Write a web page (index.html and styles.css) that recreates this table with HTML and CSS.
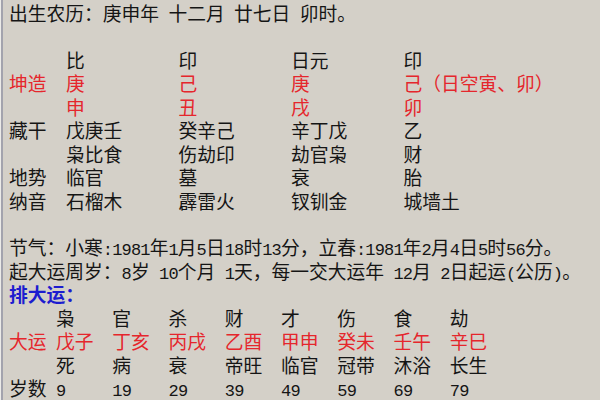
FILE: index.html
```html
<!DOCTYPE html>
<html lang="zh-CN">
<head>
<meta charset="utf-8">
<title>八字排盘</title>
<link rel="stylesheet" href="styles.css">
</head>
<body>
<div class="page">
  <p class="line">出生农历：庚申年<span class="h"> </span>十二月<span class="h"> </span>廿七日<span class="h"> </span>卯时。</p>
  <div class="blank"></div>

  <div class="pillars">
    <span></span><span>比</span><span>印</span><span>日元</span><span>印</span>
    <span class="red">坤造</span><span class="red">庚</span><span class="red">己</span><span class="red">庚</span><span class="red">己（日空寅、卯）</span>
    <span></span><span class="red">申</span><span class="red">丑</span><span class="red">戌</span><span class="red">卯</span>
    <span>藏干</span><span>戊庚壬</span><span>癸辛己</span><span>辛丁戊</span><span>乙</span>
    <span></span><span>枭比食</span><span>伤劫印</span><span>劫官枭</span><span>财</span>
    <span>地势</span><span>临官</span><span>墓</span><span>衰</span><span>胎</span>
    <span>纳音</span><span>石榴木</span><span>霹雷火</span><span>钗钏金</span><span>城墙土</span>
  </div>
  <div class="blank"></div>

  <p class="line">节气：小寒<span class="h">:1981</span>年<span class="h">1</span>月<span class="h">5</span>日<span class="h">18</span>时<span class="h">13</span>分，立春<span class="h">:1981</span>年<span class="h">2</span>月<span class="h">4</span>日<span class="h">5</span>时<span class="h">56</span>分。</p>
  <p class="line">起大运周岁：<span class="h">8</span>岁<span class="h"> 10</span>个月<span class="h"> 1</span>天，每一交大运年<span class="h"> 12</span>月<span class="h"> 2</span>日起运<span class="h">(</span>公历<span class="h">)</span>。</p>
  <p class="line title">排大运：</p>

  <div class="dayun">
    <span></span><span>枭</span><span>官</span><span>杀</span><span>财</span><span>才</span><span>伤</span><span>食</span><span>劫</span>
    <span class="red">大运</span><span class="red">戊子</span><span class="red">丁亥</span><span class="red">丙戌</span><span class="red">乙酉</span><span class="red">甲申</span><span class="red">癸未</span><span class="red">壬午</span><span class="red">辛巳</span>
    <span></span><span>死</span><span>病</span><span>衰</span><span>帝旺</span><span>临官</span><span>冠带</span><span>沐浴</span><span>长生</span>
    <span>岁数</span><span class="h">9</span><span class="h">19</span><span class="h">29</span><span class="h">39</span><span class="h">49</span><span class="h">59</span><span class="h">69</span><span class="h">79</span>
  </div>
</div>
</body>
</html>
```

FILE: styles.css
```css
html, body {
  margin: 0;
  padding: 0;
  background: #d4d0c8;
}

.page {
  box-sizing: border-box;
  width: 600px;
  height: 400px;
  overflow: hidden;
  padding: 1px 0 0 8px;
  border-left: 1px solid #ecebe8;
  box-shadow: inset 2px 0 0 #a3a3ad;
  font-family: "Noto Sans CJK SC", sans-serif;
  font-size: 18.75px;
  line-height: 23.4375px;
  color: #151515;
  white-space: nowrap;
}

.line {
  margin: 0;
  height: 23.4375px;
}

.blank {
  height: 23.4375px;
}

.h {
  font-family: "Liberation Mono", monospace;
  font-size: 17px;
  letter-spacing: -0.825px;
  line-height: 1;
  white-space: pre;
}

.red {
  color: #e5262c;
}

.title {
  color: #1c1ccf;
  font-weight: bold;
}

.pillars {
  display: grid;
  grid-template-columns: 57px 112.5px 112.5px 112.5px auto;
  grid-auto-rows: 23.4375px;
}

.dayun {
  display: grid;
  grid-template-columns: 47px repeat(8, 56.25px);
  grid-auto-rows: 23.4375px;
  align-items: baseline;
}

.dayun .h {
  line-height: 23.4375px;
}
```
